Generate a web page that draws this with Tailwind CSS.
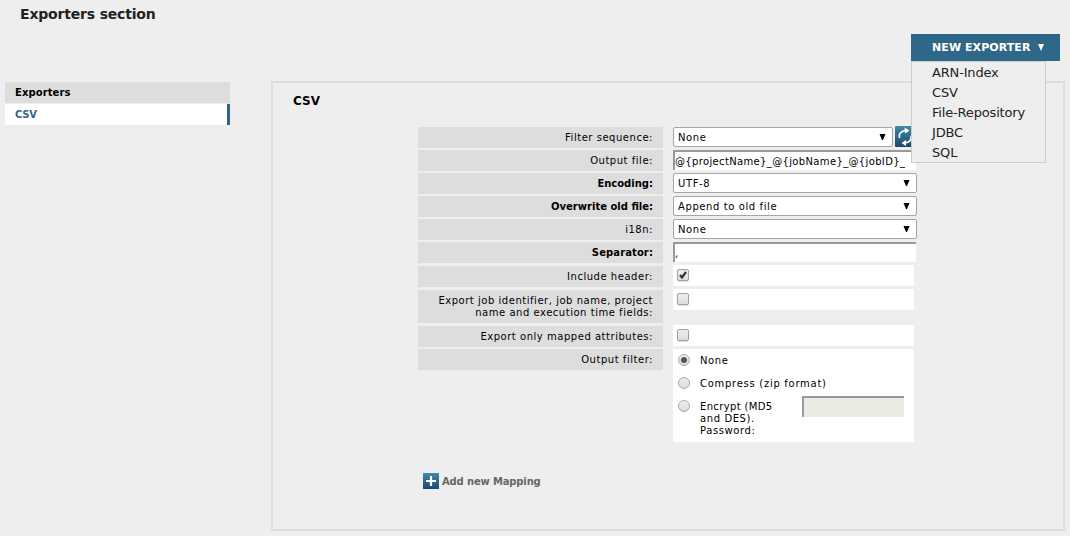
<!DOCTYPE html>
<html lang="en">
<head>
<meta charset="utf-8">
<title>Exporters section</title>
<script src="https://cdn.jsdelivr.net/npm/@tailwindcss/browser@4"></script>
</head>
<body class="relative h-[536px] w-[1070px] overflow-hidden bg-[#eeeeee] font-['DejaVu_Sans',sans-serif] text-[10px] leading-3 text-black">
<h1 class="h-[81px] pl-5 pt-[5px] text-[14px] leading-[18px] font-bold text-[#222]"><span class="tracking-[-0.18px]">Exporters section</span></h1>

<div class="flex items-start">
  <nav class="ml-[5px] mt-px w-[225px] font-bold">
    <div class="h-[21px] bg-[#ddd] pl-[10px] leading-[21px] tracking-[0.1px]">Exporters</div>
    <div class="mt-px h-[21px] border-r-[3px] border-[#2f6788] bg-white pl-[10px] leading-[21px] tracking-[-0.3px] text-[#2f6788]">CSV</div>
  </nav>

  <main class="ml-[41px] h-[450px] w-[794px] border-2 border-[#ddd]">
    <h2 class="h-[44px] pl-5 pt-[10px] text-[12px] leading-4 font-bold">CSV</h2>
    <div class="ml-[145px] flex gap-[10px]">
      <div class="flex w-[245px] flex-col gap-[2px] text-right leading-[21px] tracking-[0.53px] *:bg-[#ddd] *:pr-[10px]">
        <div class="h-[21px]">Filter sequence:</div>
        <div class="h-[21px]">Output file:</div>
        <div class="h-[21px] font-bold tracking-normal">Encoding:</div>
        <div class="h-[21px] font-bold tracking-normal">Overwrite old file:</div>
        <div class="h-[21px]">i18n:</div>
        <div class="h-[21px] font-bold tracking-[0.1px]">Separator:</div>
        <div class="mt-px h-[21px]">Include header:</div>
        <div class="mt-px h-[33px] pt-[5px] leading-3">Export job identifier, job name, project<br>name and execution time fields:</div>
        <div class="mt-px h-[21px]">Export only mapped attributes:</div>
        <div class="h-[21px]">Output filter:</div>
      </div>

      <div class="flex w-[244px] flex-col tracking-[0.6px]">
        <div class="flex gap-[2px]">
          <div class="flex h-5 w-[220px] justify-between rounded-[2px] border border-[#a5a5a5] bg-white pl-1 pr-[6px]"><span class="pt-1">None</span><svg class="mt-[6px] h-[6px] w-[7px]" viewBox="0 0 7 6"><path d="M.5 0h6L4 6H3z"/></svg></div>
          <svg class="-mt-px h-[21px] w-[21px]" viewBox="0 0 21 21"><defs><linearGradient id="tile" x2="0" y2="1"><stop stop-color="#438aa5"/><stop offset="1" stop-color="#1b4772"/></linearGradient></defs><rect width="21" height="21" rx="1" fill="url(#tile)"/><path d="M4.500 12C3.500 7.500 6 5 11 4.500M16 9.500C17 14 14.500 16.500 9.500 17" fill="none" stroke="#fff" stroke-width="1.700"/><path d="M9.500 1.500 14.500 4.500 10 7.500zM11 14 6.500 17 11 20z" fill="#fff"/></svg>
        </div>
        <div class="mt-[3px] h-5 w-[243px] border-l-2 border-t-2 border-[#999] bg-white pt-1 tracking-[0.35px] whitespace-nowrap">@{projectName}_@{jobName}_@{jobID}_</div>
        <div class="mt-[3px] flex h-5 justify-between rounded-[2px] border border-[#a5a5a5] bg-white pl-1 pr-[6px]"><span class="pt-1">UTF-8</span><svg class="mt-[6px] h-[6px] w-[7px]" viewBox="0 0 7 6"><path d="M.5 0h6L4 6H3z"/></svg></div>
        <div class="mt-[3px] flex h-5 justify-between rounded-[2px] border border-[#a5a5a5] bg-white pl-1 pr-[6px]"><span class="pt-1">Append to old file</span><svg class="mt-[6px] h-[6px] w-[7px]" viewBox="0 0 7 6"><path d="M.5 0h6L4 6H3z"/></svg></div>
        <div class="mt-[3px] flex h-5 justify-between rounded-[2px] border border-[#a5a5a5] bg-white pl-1 pr-[6px]"><span class="pt-1">None</span><svg class="mt-[6px] h-[6px] w-[7px]" viewBox="0 0 7 6"><path d="M.5 0h6L4 6H3z"/></svg></div>
        <div class="mt-[3px] h-5 w-[243px] border-l-2 border-t-2 border-[#999] bg-white pt-1">,</div>

        <div class="mt-[3px] h-[21px] w-[241px] bg-white pl-1 pt-1"><div class="h-3 w-3 rounded-[2px] border border-[#a0a0a0] bg-linear-to-b from-[#eee] to-[#ddd] shadow-[0_1px_1px_#ddd]"><svg class="h-[10px] w-[10px]" viewBox="0 0 10 10"><path d="m2 5 2 2.500L8 2" fill="none" stroke="#333" stroke-width="2.200"/></svg></div></div>
        <div class="mt-[3px] h-[21px] w-[241px] bg-white pl-1 pt-1"><div class="h-3 w-3 rounded-[2px] border border-[#a0a0a0] bg-linear-to-b from-[#eee] to-[#ddd] shadow-[0_1px_1px_#ddd]"></div></div>
        <div class="mt-[15px] h-[21px] w-[241px] bg-white pl-1 pt-1"><div class="h-3 w-3 rounded-[2px] border border-[#a0a0a0] bg-linear-to-b from-[#eee] to-[#ddd] shadow-[0_1px_1px_#ddd]"></div></div>

        <div class="mt-[3px] h-[93px] w-[241px] bg-white pl-[5px] pt-[5px]">
          <div class="flex h-[23px] gap-[10px]"><div class="flex h-3 w-3 items-center justify-center rounded-full border border-[#aaa] bg-linear-to-b from-[#eee] to-[#ddd]"><div class="h-[6px] w-[6px] rounded-full bg-[#555]"></div></div><span class="pt-px">None</span></div>
          <div class="flex h-[23px] gap-[10px]"><div class="h-3 w-3 rounded-full border border-[#aaa] bg-linear-to-b from-[#eee] to-[#ddd]"></div><span class="pt-px tracking-[0.72px]">Compress (zip format)</span></div>
          <div class="flex gap-[10px]"><div class="h-3 w-3 rounded-full border border-[#aaa] bg-linear-to-b from-[#eee] to-[#ddd]"></div><span class="w-[92px] pt-px"><span class="tracking-[0.35px]">Encrypt (MD5</span><br>and DES).<br>Password:</span><div class="-mt-[4px] h-[21px] w-[102px] border-l-2 border-t-2 border-[#999] bg-[#ebebe4]"></div></div>
        </div>
      </div>
    </div>
    <div class="ml-[150px] mt-[31px] flex items-center gap-1 text-[10px] font-bold text-[#666]">
      <svg class="h-4 w-4" viewBox="0 0 16 16"><rect width="16" height="16" rx=".5" fill="url(#tile)"/><path d="M8 3v10M3 8h10" stroke="#fff" stroke-width="2.200"/></svg>
      <span class="-ml-px pt-px tracking-[-0.15px]">Add new Mapping</span>
    </div>
  </main>
</div>

<div class="absolute left-[911px] top-[34px] w-[149px] text-[#222]">
  <div class="flex h-[27px] items-center bg-[#2f6788] pl-[21px] text-[11px] font-bold text-white"><span class="w-[106px] tracking-[0.08px]">NEW EXPORTER</span><svg class="h-[7px] w-[6px]" viewBox="0 0 6 7"><path d="M0 0h6L3 7z" fill="#fff"/></svg></div>
  <ul class="h-[102px] w-[135px] border border-[#ccc] bg-[#eee] pl-5 pt-px text-[13px] leading-5 tracking-[-0.17px]">
    <li>ARN-Index</li>
    <li>CSV</li>
    <li>File-Repository</li>
    <li>JDBC</li>
    <li>SQL</li>
  </ul>
</div>
</body>
</html>
